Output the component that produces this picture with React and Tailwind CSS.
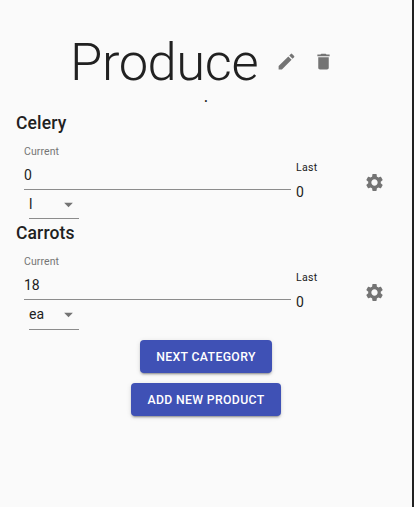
const PENCIL = "M3 17.25V21h3.75L17.81 9.94l-3.75-3.75L3 17.25zM20.71 7.04c.39-.39.39-1.02 0-1.41l-2.34-2.34a.9959.9959 0 0 0-1.41 0l-1.83 1.83 3.75 3.75 1.83-1.83z";
const TRASH = "M6 19c0 1.1.9 2 2 2h8c1.1 0 2-.9 2-2V7H6v12zM19 4h-3.5l-1-1h-5l-1 1H5v2h14V4z";
const GEAR = "M19.14 12.94c.04-.3.06-.61.06-.94 0-.32-.02-.64-.07-.94l2.03-1.58c.18-.14.23-.41.12-.61l-1.92-3.32c-.12-.22-.37-.29-.59-.22l-2.39.96c-.5-.38-1.03-.7-1.62-.94l-.36-2.54c-.04-.24-.24-.41-.48-.41h-3.84c-.24 0-.43.17-.47.41l-.36 2.54c-.59.24-1.13.57-1.62.94l-2.39-.96c-.22-.08-.47 0-.59.22L2.74 8.87c-.12.21-.08.47.12.61l2.03 1.58c-.05.3-.09.63-.09.94s.02.64.07.94l-2.03 1.58c-.18.14-.23.41-.12.61l1.92 3.32c.12.22.37.29.59.22l2.39-.96c.5.38 1.03.7 1.62.94l.36 2.54c.05.24.24.41.48.41h3.84c.24 0 .44-.17.47-.41l.36-2.54c.59-.24 1.13-.56 1.62-.94l2.39.96c.22.08.47 0 .59-.22l1.92-3.32c.12-.22.07-.47-.12-.61l-2.01-1.58zM12 15.6c-1.98 0-3.6-1.62-3.6-3.6s1.62-3.6 3.6-3.6 3.6 1.62 3.6 3.6-1.62 3.6-3.6 3.6z";

function Icon({ path }) {
  return (
    <svg viewBox="0 0 24 24" className="block h-[21px] w-[21px] shrink-0 fill-[#747474]">
      <path d={path} />
    </svg>
  );
}

function Product({ name, current, unit, selectHeight = "h-[29px]" }) {
  return (
    <section className="h-[110px]">
      <h2 className="h-7 pl-4 text-[17.5px] font-medium leading-7 tracking-[0.0075em]">{name}</h2>
      <div className="flex h-[82px]">
        <div className="ml-6 w-[267px]">
          <label className="block h-[27px] pt-[8px] text-[10.5px] leading-[13px] tracking-[0.00938em] text-[#757575]">Current</label>
          <div className="h-[26px] border-b border-[#8c8c8c] text-[14px] leading-[22px]">{current}</div>
          <div className={`ml-[5px] flex w-[50px] justify-between border-b border-[#8c8c8c] text-[14px] leading-[29px] ${selectHeight}`}>
            <span>{unit}</span>
            <svg viewBox="0 0 24 24" className="mt-[4px] block h-[21px] w-[21px] fill-[#747474]">
              <path d="M7 10l5 5 5-5z" />
            </svg>
          </div>
        </div>
        <div className="ml-[5px] w-[68px] pt-[24px]">
          <div className="text-[10.5px] leading-[13px] tracking-[0.03em]">Last</div>
          <div className="pt-[8px] text-[14px] leading-[20px]">0</div>
        </div>
        <button aria-label="Product settings" className="mt-[35px] h-[21px]">
          <Icon path={GEAR} />
        </button>
      </div>
    </section>
  );
}

function Button({ children }) {
  return (
    <button className="h-[33px] rounded-[4px] bg-[#3f51b5] px-4 pt-px text-[12.25px] font-medium uppercase leading-[32px] tracking-[0.02857em] text-white shadow-[0px_3px_1px_-2px_rgba(0,0,0,0.2),0px_2px_2px_0px_rgba(0,0,0,0.14),0px_1px_5px_0px_rgba(0,0,0,0.12)]">
      {children}
    </button>
  );
}

export default function App() {
  return (
    <main className="h-[507px] w-[414px] overflow-hidden border-r-2 border-[#222] bg-[#fafafa] font-['Roboto',sans-serif] text-[#212121]">
      <header className="flex h-[92px] items-start pl-[70px] pt-[32px]">
        <h1 className="w-[206px] text-[52.5px] font-light leading-[60px] tracking-[-0.00833em]">Produce</h1>
        <button aria-label="Edit category" className="mt-[19px]"><Icon path={PENCIL} /></button>
        <button aria-label="Delete category" className="ml-4 mt-[19px]"><Icon path={TRASH} /></button>
      </header>
      <div className="h-[17px] text-center text-[14px] font-medium leading-[10px]">.</div>
      <Product name="Celery" current="0" unit="l" />
      <Product name="Carrots" current="18" unit="ea" selectHeight="h-[30px]" />
      <div className="flex flex-col items-center gap-[10px] pt-[11px]">
        <Button>Next category</Button>
        <Button>Add new product</Button>
      </div>
    </main>
  );
}
